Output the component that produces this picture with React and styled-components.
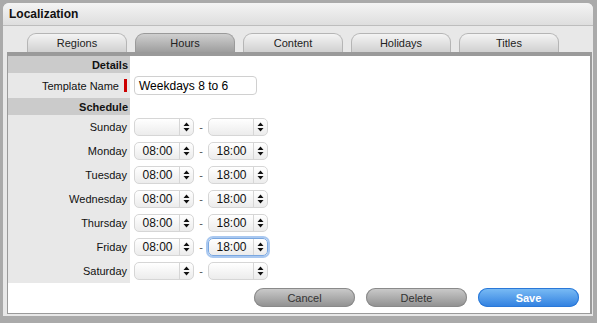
import styled, { createGlobalStyle, css } from "styled-components";

const GlobalStyle = createGlobalStyle`
  html, body {
    margin: 0;
    padding: 0;
    background: #aaaaaa;
  }
  body {
    font-family: "Liberation Sans", Arial, sans-serif;
    font-size: 11px;
    color: #111;
  }
`;

const Outer = styled.div`
  width: 597px;
  height: 323px;
  padding: 3px 4px 7px 3px;
  box-sizing: border-box;
`;

const Window = styled.div`
  height: 313px;
  background: #e8e8e8;
  border-radius: 6px 6px 0 0;
  display: flex;
  flex-direction: column;
  overflow: hidden;
`;

const TitleBar = styled.div`
  height: 22px;
  flex: none;
  display: flex;
  align-items: center;
  padding-left: 6px;
  font-size: 12px;
  font-weight: bold;
  background: linear-gradient(#f4f4f4, #dedede);
  border-bottom: 1px solid #bdbdbd;
`;

const Tabs = styled.div`
  display: flex;
  gap: 8px;
  padding: 7px 0 0 24px;
  height: 19px;
  flex: none;
`;

const Tab = styled.div`
  width: 100px;
  height: 19px;
  box-sizing: border-box;
  border: 1px solid #b5b5b5;
  border-bottom: none;
  border-radius: 9px 9px 0 0;
  display: flex;
  align-items: center;
  justify-content: center;
  color: #222;
  font-size: 11px;
  background: linear-gradient(#f4f4f4, #d0d0d0);
  ${(p) =>
    p.$active &&
    css`
      background: linear-gradient(#cfcfcf, #9e9e9e);
      border-color: #9a9a9a;
    `}
`;

const Panel = styled.div`
  flex: 1;
  margin: 0 1px 2px 4px;
  background: #fff;
  border: 1px solid #9a9a9a;
  border-top: 4px solid #9a9a9a;
  border-right-width: 2px;
  display: flex;
  flex-direction: column;
`;

const Grid = styled.div`
  display: grid;
  grid-template-columns: 122px 1fr;
`;

const Label = styled.div`
  background: #e8e8e8;
  display: flex;
  align-items: center;
  justify-content: flex-end;
  padding-right: 3px;
  height: ${(p) => p.$h || 24}px;
`;

const SectionLabel = styled(Label)`
  background: #cbcbcb;
  font-weight: bold;
  padding-right: 2px;
`;

const Cell = styled.div`
  display: flex;
  align-items: center;
  padding-left: 4px;
  height: ${(p) => p.$h || 24}px;
`;

const Required = styled.span`
  width: 3px;
  height: 13px;
  background: #c00;
  margin-left: 5px;
`;

const TextInput = styled.div`
  width: 123px;
  height: 19px;
  box-sizing: border-box;
  border: 1px solid #d0d0d0;
  border-radius: 4px;
  display: flex;
  align-items: center;
  padding-left: 4px;
  font-size: 12px;
  color: #000;
`;

const Select = styled.div`
  width: 60px;
  height: 18px;
  box-sizing: border-box;
  border: 1px solid #d6d6d6;
  border-radius: 5px;
  background: linear-gradient(#ffffff, #ececec);
  display: flex;
  font-size: 12px;
  ${(p) =>
    p.$focus &&
    css`
      border-color: #7aa7e0;
      box-shadow: 0 0 0 2px #a9c8f0;
    `}
`;

const SelectValue = styled.div`
  flex: 1;
  display: flex;
  align-items: center;
  justify-content: center;
  padding-left: 1px;
  border-right: 1px solid #d6d6d6;
`;

const Arrows = styled.div`
  width: 13px;
  display: flex;
  align-items: center;
  justify-content: center;
`;

const Dash = styled.span`
  width: 14px;
  text-align: center;
  color: #555;
`;

const Footer = styled.div`
  display: flex;
  justify-content: flex-end;
  gap: 11px;
  padding: 5px 11px 0 0;
`;

const Button = styled.div`
  width: 101px;
  height: 19px;
  border-radius: 10px;
  display: flex;
  align-items: center;
  justify-content: center;
  font-size: 11px;
  color: #333;
  background: linear-gradient(#cccccc, #8f8f8f);
  box-shadow: inset 0 0 0 1px #8a8a8a;
  ${(p) =>
    p.$primary &&
    css`
      color: #fff;
      font-weight: bold;
      background: linear-gradient(#7cbdf5, #2f7fe0);
      box-shadow: inset 0 0 0 1px #2a78d8;
    `}
`;

const ArrowIcon = () => (
  <svg width="7" height="10" viewBox="0 0 7 10">
    <path d="M0.5 4 L3.5 0.5 L6.5 4 Z M0.5 6 L3.5 9.5 L6.5 6 Z" fill="#111" />
  </svg>
);

const TimeSelect = ({ value, focus }) => (
  <Select $focus={focus}>
    <SelectValue>{value}</SelectValue>
    <Arrows>
      <ArrowIcon />
    </Arrows>
  </Select>
);

const days = [
  { name: "Sunday", from: "", to: "" },
  { name: "Monday", from: "08:00", to: "18:00" },
  { name: "Tuesday", from: "08:00", to: "18:00" },
  { name: "Wednesday", from: "08:00", to: "18:00" },
  { name: "Thursday", from: "08:00", to: "18:00" },
  { name: "Friday", from: "08:00", to: "18:00", focus: true },
  { name: "Saturday", from: "", to: "" },
];

const tabs = ["Regions", "Hours", "Content", "Holidays", "Titles"];

export default function App() {
  return (
    <Outer>
      <GlobalStyle />
      <Window>
        <TitleBar>Localization</TitleBar>
        <Tabs>
          {tabs.map((t) => (
            <Tab key={t} $active={t === "Hours"}>
              {t}
            </Tab>
          ))}
        </Tabs>
        <Panel>
          <Grid>
            <SectionLabel $h={17}>Details</SectionLabel>
            <Cell $h={17} />
            <Label $h={25}>
              Template Name
              <Required />
            </Label>
            <Cell $h={25}>
              <TextInput>Weekdays 8 to 6</TextInput>
            </Cell>
            <SectionLabel $h={17}>Schedule</SectionLabel>
            <Cell $h={17} />
            {days.map((d) => (
              <>
                <Label key={d.name + "l"}>{d.name}</Label>
                <Cell key={d.name + "c"}>
                  <TimeSelect value={d.from} />
                  <Dash>-</Dash>
                  <TimeSelect value={d.to} focus={d.focus} />
                </Cell>
              </>
            ))}
          </Grid>
          <Footer>
            <Button>Cancel</Button>
            <Button>Delete</Button>
            <Button $primary>Save</Button>
          </Footer>
        </Panel>
      </Window>
    </Outer>
  );
}
